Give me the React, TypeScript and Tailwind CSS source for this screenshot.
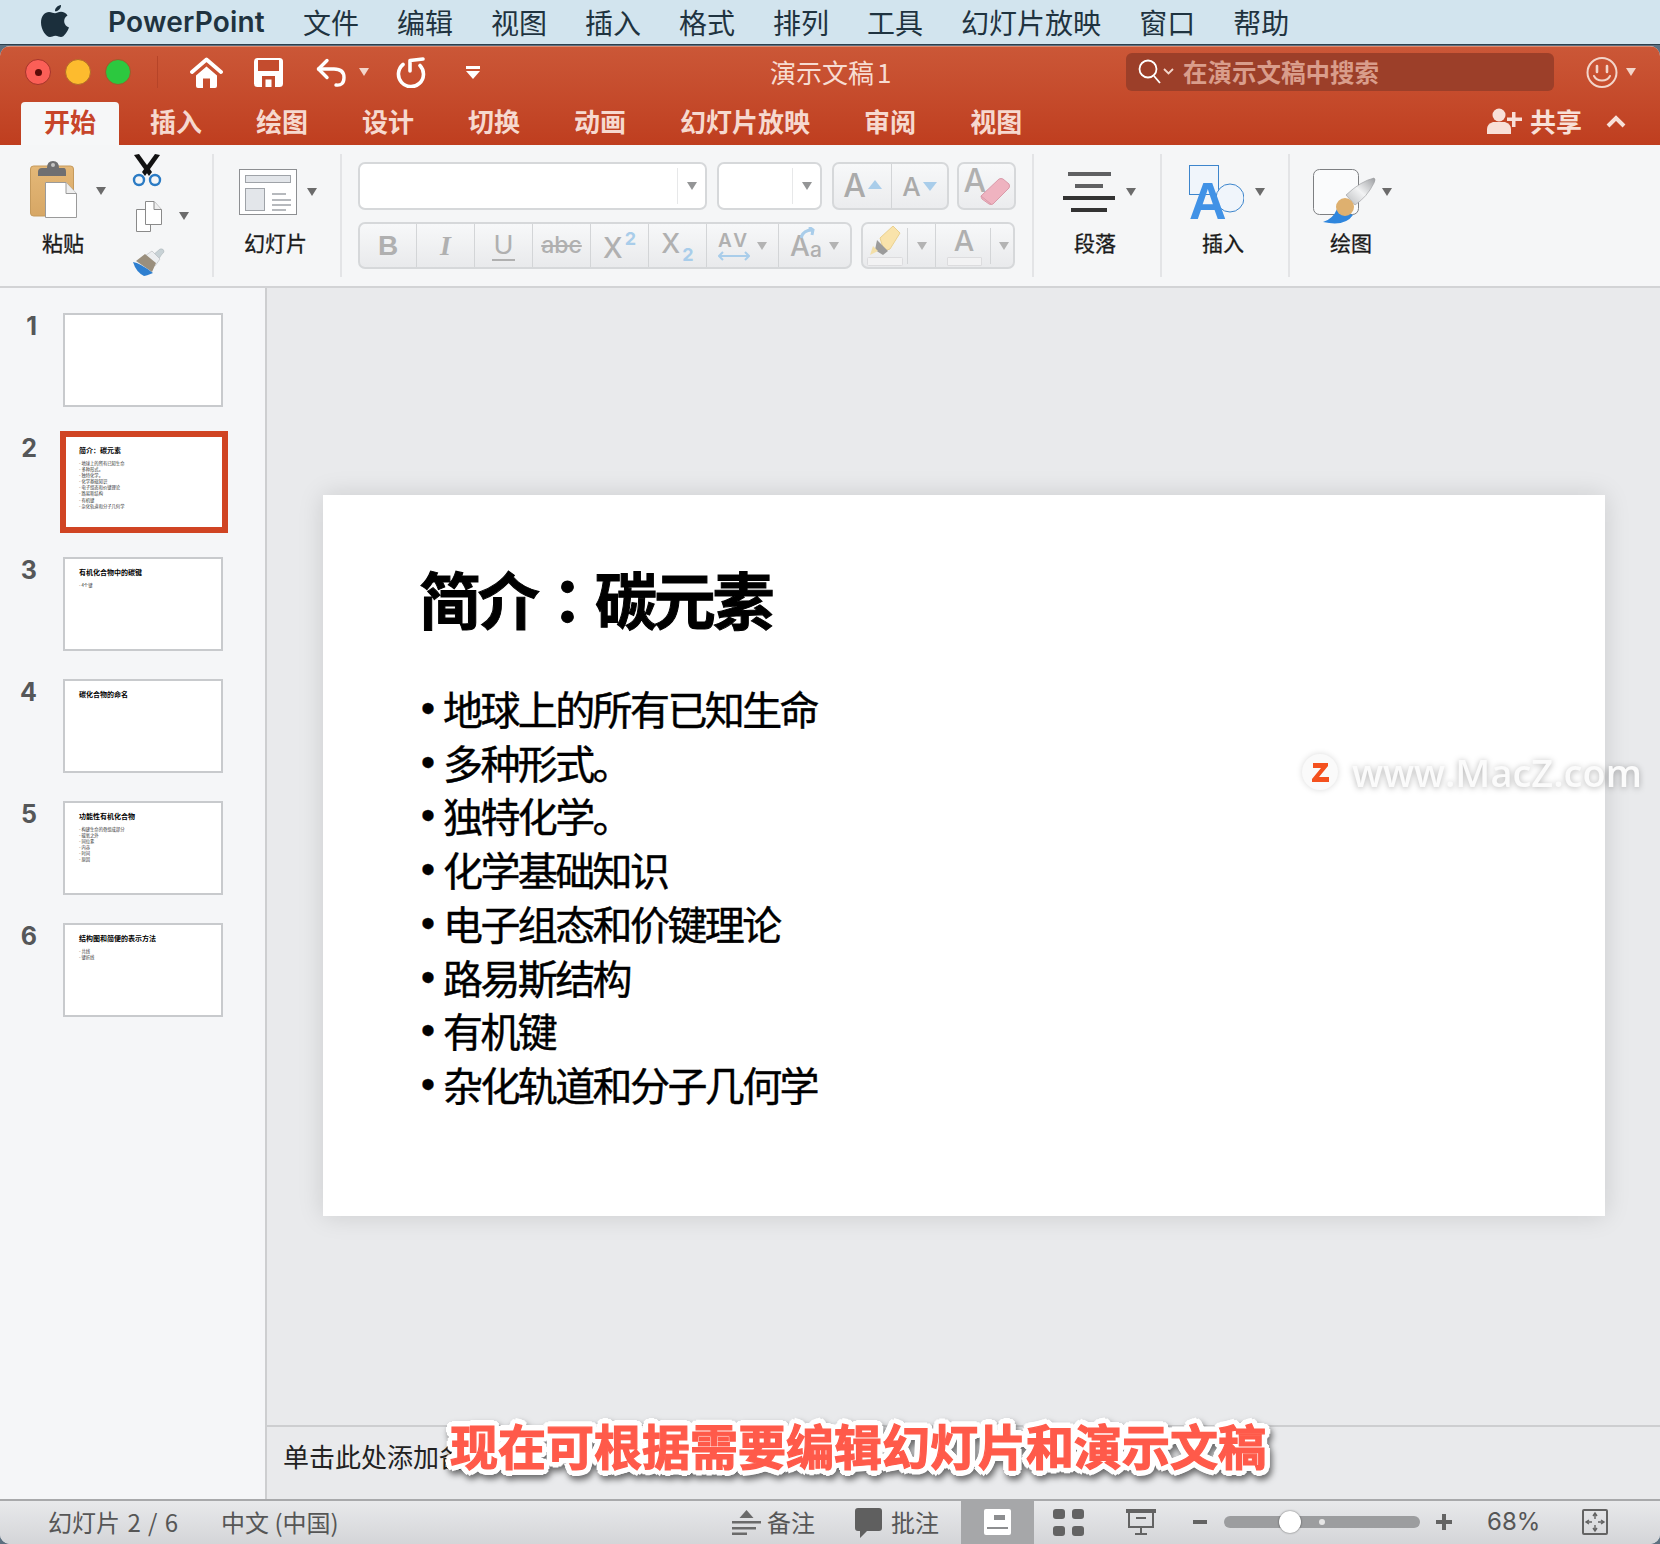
import React from 'react';

const menuItems = ['文件', '编辑', '视图', '插入', '格式', '排列', '工具', '幻灯片放映', '窗口', '帮助'];
const tabs = ['插入', '绘图', '设计', '切换', '动画', '幻灯片放映', '审阅', '视图'];

const slides = [
  { n: 1, title: '', items: [] as string[] },
  { n: 2, title: '简介：碳元素', items: ['地球上的所有已知生命', '多种形式。', '独特化学。', '化学基础知识', '电子组态和价键理论', '路易斯结构', '有机键', '杂化轨道和分子几何学'] },
  { n: 3, title: '有机化合物中的碳键', items: ['4个键'] },
  { n: 4, title: '碳化合物的命名', items: [] },
  { n: 5, title: '功能性有机化合物', items: ['构建生命的骨组成部分', '碳氧之外', '同位素', '内容', '时间', '原因'] },
  { n: 6, title: '结构图和简便的表示方法', items: ['共线', '键折线'] },
];

function Caret({ className = 'text-[#6b6b6b]' }: { className?: string }) {
  return (
    <svg width="10" height="8" viewBox="0 0 10 8" className={className}>
      <path d="M0 0h10L5 8z" fill="currentColor" />
    </svg>
  );
}

function Label({ className, children }: { className: string; children: React.ReactNode }) {
  return (
    <div className={`${className} text-[21px] leading-[28px] whitespace-nowrap [-webkit-text-stroke:0.3px_#1a1a1a]`}>
      {children}
    </div>
  );
}

function Thumb({ title, items, active }: { title: string; items: string[]; active: boolean }) {
  return (
    <div
      className={
        active
          ? 'w-[168px] h-[102px] -ml-[3px] -my-[4px] border-[6px] border-[#d04423] bg-white pl-[13px] pt-[6px]'
          : 'w-[160px] h-[94px] border-2 border-[#c8cacd] bg-white pl-[14px] pt-[6px]'
      }
    >
      {title && <div className="text-[7px] leading-[14px] font-bold text-black whitespace-nowrap">{title}</div>}
      {items.length > 0 && (
        <div className="mt-[3px] text-[4.3px] leading-[6.1px] text-[#333]">
          {items.map((t) => (
            <div key={t} className="whitespace-nowrap">- {t}</div>
          ))}
        </div>
      )}
    </div>
  );
}

function ToolBtn({ w, children, last }: { w: string; children: React.ReactNode; last?: boolean }) {
  return (
    <div className={`${w} h-full flex items-center justify-center ${last ? '' : 'border-r border-[#d3d5d7]'}`}>
      {children}
    </div>
  );
}

function Home() {
  return (
    <svg width="33" height="31" viewBox="0 0 33 31" fill="white">
      <path d="M2 15 16.500 2.500 31 15" fill="none" stroke="white" strokeWidth="3.800" strokeLinecap="round" strokeLinejoin="round" />
      <path d="M6 18.500 16.500 9.500 27 18.500V29q0 2-2 2h-5v-9.500h-7V31H8q-2 0-2-2z" />
    </svg>
  );
}

function Save() {
  return (
    <svg width="29" height="29" viewBox="0 0 29 29">
      <rect width="29" height="29" rx="3.500" fill="white" />
      <rect x="4" y="2" width="21" height="11" fill="#c44c2e" />
      <rect x="8" y="18" width="13" height="11" fill="#c44c2e" />
      <rect x="11.500" y="21.500" width="6" height="7.500" fill="white" />
    </svg>
  );
}

function Undo() {
  return (
    <svg width="31" height="29" viewBox="0 0 31 29" fill="none" stroke="white" strokeWidth="3.400" strokeLinecap="round" strokeLinejoin="round">
      <path d="M11 2.500 2.500 11l8.500 8.500" />
      <path d="M2.500 11H18q10 0 10 8.500T20 27" />
    </svg>
  );
}

function Redo() {
  return (
    <svg width="31" height="31" viewBox="0 0 31 31" fill="none" stroke="white" strokeWidth="3.600" strokeLinecap="round" strokeLinejoin="round">
      <path d="M14 14V3.500L27 2" />
      <path d="M7 7.500a12.500 12.500 0 1 0 17 1" />
    </svg>
  );
}

function Smiley() {
  return (
    <svg width="32" height="33" viewBox="0 0 32 33" fill="none" stroke="#f3d5ca" strokeWidth="2">
      <circle cx="16" cy="16.500" r="14.500" />
      <path d="M11 10v6M21 10v6" strokeWidth="2.600" strokeLinecap="round" />
      <path d="M8 20c3 6 13 6 16 0" strokeLinecap="round" />
    </svg>
  );
}

function Scissors() {
  return (
    <svg width="30" height="33" viewBox="0 0 30 33" fill="none">
      <path d="M2 1l5-1 13 18-3 4z" fill="#111" />
      <path d="M28 1l-5-1-13 18 3 4z" fill="#111" />
      <circle cx="7" cy="26" r="5" stroke="#2b7bc4" strokeWidth="2.400" />
      <circle cx="23" cy="26" r="5" stroke="#2b7bc4" strokeWidth="2.400" />
    </svg>
  );
}

function Clipboard() {
  return (
    <svg width="47" height="58" viewBox="0 0 47 58">
      <defs>
        <linearGradient id="board" x1="0" y1="0" x2="0" y2="1">
          <stop offset="0" stopColor="#e4b878" />
          <stop offset="1" stopColor="#d7a765" />
        </linearGradient>
      </defs>
      <rect x="0.500" y="6" width="43" height="50" rx="3" fill="url(#board)" stroke="#c59a5c" />
      <path d="M8 16v-4q0-4 4-4h5q0-7 6-7t6 7h5q2 0 2 4v4z" fill="#6f6f71" />
      <circle cx="23" cy="5" r="2" fill="#c4c4c4" />
      <path d="M15.500 22.500H36l10.500 11v24h-31z" fill="white" stroke="#9a9a9a" />
      <path d="M36 22.500v11h10.500" fill="#eee" stroke="#9a9a9a" />
    </svg>
  );
}

function Copy() {
  return (
    <svg width="26" height="31" viewBox="0 0 26 31" fill="white" stroke="#8a8a8a">
      <path d="M.5 8.500h14v22H.5z" />
      <path d="M9.500.5H18l7.500 8v15h-16z" />
      <path d="M18 .5v8h7.500" fill="#eee" />
    </svg>
  );
}

function FormatBrush() {
  return (
    <svg width="33" height="29" viewBox="0 0 33 29">
      <path d="M21 7 28 1q3-1 4 2 0 2-2 3l-4 6z" fill="#c8d2d6" stroke="#a5aeb2" strokeWidth="0.500" />
      <path d="M10 10 20 3l8 8-5 7z" fill="#eceef0" stroke="#a8acb0" strokeWidth="0.500" />
      <path d="M4 13 13 6l11 9-4 9Q10 17 4 13z" fill="#9a8f7d" />
      <path d="M1 14Q8 15 21 25q-7 3-9 3Q4 24 1 14z" fill="#2e7fd0" />
    </svg>
  );
}

function LayoutIcon() {
  return (
    <svg width="58" height="46" viewBox="0 0 58 46" fill="none">
      <rect x="0.500" y="0.500" width="57" height="45" fill="white" stroke="#8d8f92" />
      <rect x="6.500" y="6.500" width="45" height="7" fill="#e3e6ea" stroke="#9fa3a8" />
      <rect x="6.500" y="19.500" width="19" height="22" fill="#e3e6ea" stroke="#9fa3a8" />
      <path d="M33 25h14M33 31h19M33 36h19M33 41h14" stroke="#9fa3a8" strokeWidth="1.600" />
    </svg>
  );
}

function ParaIcon() {
  return (
    <div className="w-[52px] flex flex-col items-center gap-[8px]">
      <div className="w-[43px] h-[4px] bg-[#5f6062]" />
      <div className="w-[28px] h-[4px] bg-[#5f6062]" />
      <div className="w-[52px] h-[4px] bg-[#333]" />
      <div className="w-[36px] h-[4px] bg-[#333]" />
    </div>
  );
}

function InsertIcon() {
  return (
    <div className="relative w-[55px] h-[56px]">
      <svg width="55" height="56" viewBox="0 0 55 56">
        <rect x="0.500" y="0.500" width="29" height="29" fill="#f0f5fb" stroke="#3d85cc" />
        <circle cx="41" cy="33" r="14" fill="#f0f5fb" stroke="#3d85cc" />
      </svg>
      <span className="absolute left-0 bottom-0 font-['Liberation_Sans',sans-serif] font-bold text-[52px] leading-[39px] text-[#4192e6]">A</span>
    </div>
  );
}

function DrawIcon() {
  return (
    <svg width="63" height="57" viewBox="0 0 63 57">
      <defs>
        <linearGradient id="handle" x1="0" y1="1" x2="1" y2="0">
          <stop offset="0" stopColor="#b9bbbd" />
          <stop offset="0.500" stopColor="#f2f3f4" />
          <stop offset="1" stopColor="#9c9ea1" />
        </linearGradient>
      </defs>
      <rect x="0.500" y="0.500" width="45" height="45" rx="6" fill="#fafbfc" stroke="#7d7f82" />
      <path d="M33 26Q48 12 61 9q2 1 0 5Q54 28 42 36z" fill="url(#handle)" stroke="#97999c" strokeWidth="0.600" />
      <path d="M10 53Q20 50 24 40L40 46Q32 58 10 53z" fill="#2f86dd" />
      <circle cx="32" cy="38" r="9" fill="#deb06f" />
    </svg>
  );
}

function Eraser() {
  return (
    <div className="relative w-[46px] h-[40px] flex items-start">
      <span className="font-['Inter',sans-serif] font-medium text-[32px] leading-[30px] text-[#b0b0b0]">A</span>
      <svg width="31" height="29" viewBox="0 0 31 29" className="absolute right-0 bottom-0">
        <path d="M2 19 20 2q2-1 4 0l6 5q1 2 0 4L14 27q-2 1-4 0l-7-5q-1-2-1-3z" fill="#efb3c0" stroke="#d99aa9" />
        <path d="M2 19l10 8" stroke="#d99aa9" fill="none" />
      </svg>
    </div>
  );
}

function Highlighter() {
  return (
    <svg width="36" height="40" viewBox="0 0 36 40">
      <path d="M13 12 26 0l7 7-10 16-6 2z" fill="#f9e3ab" stroke="#e9d08f" />
      <path d="M10 14l11 11-5 4-8-5z" fill="#9b9b9b" />
      <path d="M6 20l5 5-8 4z" fill="#f3dfa8" />
      <rect x="0.500" y="31.500" width="35" height="8" rx="1" fill="#f2f2f3" stroke="#dcdcde" />
    </svg>
  );
}

export default function App() {
  return (
    <div className="relative w-[1660px] h-[1544px] overflow-hidden flex flex-col bg-[#5d7080] font-['Noto_Sans_CJK_SC',sans-serif]">
      {/* menu bar */}
      <div className="h-[45px] shrink-0 flex items-center pb-[1px] bg-[#d2e4ee] border-b border-[#2c3f4c] text-[#1f3340]">
        <svg width="28" height="32" viewBox="0 0 28 32" className="ml-[41px] mb-[2px]" fill="#1b2f3c">
          <path d="M20 0c.3 3-2.600 6.500-6 6.300C13.600 3.300 16.800.300 20 0z" />
          <path d="M14 8.300c1.600 0 3.500-1.500 6-1.500 2.500 0 5 1.300 6.500 3.600-5 3-4.200 10 1.500 12-1.500 4-5 9.600-8 9.600-2 0-3-1.300-5.500-1.300s-3.600 1.300-5.500 1.300C5 32 0 24.500 0 17.500 0 11 4 7 8 7c2.500 0 4.500 1.300 6 1.300z" />
        </svg>
        <div className="ml-[39px] w-[195px] font-['Inter',sans-serif] font-semibold text-[28px] tracking-[0.2px]">PowerPoint</div>
        <div className="flex gap-[38px] text-[28px] leading-none">
          {menuItems.map((m) => (
            <span key={m + m.length} className="whitespace-nowrap">{m}</span>
          ))}
        </div>
      </div>

      {/* app window */}
      <div className="flex-1 min-h-0 mt-[1px] flex flex-col rounded-[10px] overflow-hidden bg-[#e9eaec]">
        <div className="h-[99px] shrink-0 bg-gradient-to-b from-[#cb5737] to-[#bf3e1f] border-t border-[#de8a70] flex flex-col">
          <div className="h-[55px] flex items-center pb-[5px]">
            <div className="w-[770px] flex items-center pl-[25px]">
              <div className="w-[26px] h-[26px] rounded-full bg-[#fb5f57] border border-[#a5342a] flex items-center justify-center">
                <div className="w-[7px] h-[7px] rounded-full bg-[#5c0c08]" />
              </div>
              <div className="ml-[14px] w-[26px] h-[26px] rounded-full bg-[#fdbb2e] border border-[#b26b28]" />
              <div className="ml-[14px] w-[26px] h-[26px] rounded-full bg-[#2cc83f] border border-[#a5562a]" />
              <div className="ml-[26px] w-px h-[32px] bg-[#b64428]" />
              <div className="ml-[32px]"><Home /></div>
              <div className="ml-[31px]"><Save /></div>
              <div className="ml-[33px]"><Undo /></div>
              <div className="ml-[12px]"><Caret className="text-[#f3d5ca]" /></div>
              <div className="ml-[27px]"><Redo /></div>
              <div className="ml-[39px] flex flex-col items-center gap-[2px]">
                <div className="w-[14px] h-[3px] bg-white" />
                <svg width="14" height="8" viewBox="0 0 14 8"><path d="M0 0h14L7 8z" fill="white" /></svg>
              </div>
            </div>
            <div className="w-[356px] text-[26px] leading-none text-[#f7dcd2]">演示文稿<span className="ml-[3px]">1</span></div>
            <div className="w-[428px] h-[38px] rounded-[6px] bg-[#9c3f29] flex items-center pl-[11px]">
              <svg width="37" height="30" viewBox="0 0 37 30" fill="none" stroke="white" strokeWidth="1.800">
                <circle cx="11" cy="12" r="8.500" />
                <path d="M17 19l6 7" />
                <path d="M27 12l4.500 4.500L36 12" stroke="#f3d5ca" />
              </svg>
              <span className="ml-[9px] text-[24.5px] leading-none font-bold text-[#d99d8b]">在演示文稿中搜索</span>
            </div>
            <div className="ml-[32px]"><Smiley /></div>
            <div className="ml-[8px]"><Caret className="text-[#f3d5ca]" /></div>
          </div>
          <div className="h-[43px] flex pl-[21px] gap-2">
            <div className="h-[43px] px-[23px] pb-[6px] rounded-t-[4px] bg-[#f6f7f8] flex items-center text-[26px] font-bold text-[#c7452a]">开始</div>
            {tabs.map((t) => (
              <div key={t + t.length} className="h-[43px] px-[23px] pb-[6px] flex items-center text-[26px] font-bold text-[#f6d9cf] whitespace-nowrap">{t}</div>
            ))}
            <div className="ml-auto flex items-center pr-[34px] pb-[6px] text-[#f8e0d8]">
              <svg width="35" height="26" viewBox="0 0 35 26" fill="#f8e0d8">
                <circle cx="12" cy="7" r="6.500" />
                <path d="M0 26v-5q0-5 6-7h12q6 2 6 7v5z" />
                <path d="M25 4h3.500v5.500H35V13h-6.500v6H25v-6h-5V9.500h5z" />
              </svg>
              <span className="ml-[8px] text-[26px] leading-none font-bold">共享</span>
              <svg width="20" height="14" viewBox="0 0 20 14" fill="none" stroke="#f8e0d8" strokeWidth="4" className="ml-[24px]">
                <path d="M2 12l8-8 8 8" />
              </svg>
            </div>
          </div>
        </div>

        {/* ribbon */}
        <div className="h-[143px] shrink-0 flex items-start bg-[#f5f6f7] border-b-2 border-[#d2d3d5] text-[#1a1a1a]">
          <div className="mt-[9px] h-[123px] w-[214px] shrink-0 border-r-2 border-[#e3e4e6] flex">
            <div className="w-[132px] pl-[30px] pt-[6px]">
              <div className="flex h-[58px]">
                <Clipboard />
                <div className="ml-[19px] mt-[27px]"><Caret /></div>
              </div>
              <Label className="ml-[12px] mt-[10px]">粘贴</Label>
            </div>
            <div className="flex flex-col">
              <div className="h-[47px]"><Scissors /></div>
              <div className="ml-[4px] h-[47px] flex">
                <Copy />
                <div className="ml-[17px] mt-[11px]"><Caret /></div>
              </div>
              <FormatBrush />
            </div>
          </div>
          <div className="mt-[9px] h-[123px] w-[128px] shrink-0 border-r-2 border-[#e3e4e6] pl-[25px] pt-[15px]">
            <div className="flex h-[49px]">
              <LayoutIcon />
              <div className="ml-[10px] mt-[19px]"><Caret /></div>
            </div>
            <Label className="ml-[5px] mt-[10px]">幻灯片</Label>
          </div>

          {/* font group, disabled because no text is selected */}
          <div className="mt-[9px] h-[123px] w-[692px] shrink-0 border-r-2 border-[#e3e4e6] pl-[16px] pt-[8px] flex flex-col gap-[12px]">
            <div className="flex h-[48px]">
              <div className="w-[349px] rounded-[7px] border-2 border-[#d6d8da] bg-white flex items-center">
                <div className="ml-auto h-[36px] w-[28px] border-l border-[#e7e8e9] flex items-center justify-center">
                  <Caret className="text-[#949596]" />
                </div>
              </div>
              <div className="ml-[10px] w-[105px] rounded-[7px] border-2 border-[#d6d8da] bg-white flex items-center">
                <div className="ml-auto h-[36px] w-[28px] border-l border-[#e7e8e9] flex items-center justify-center">
                  <Caret className="text-[#949596]" />
                </div>
              </div>
              <div className="ml-[10px] w-[117px] rounded-[7px] border-2 border-[#d6d8da] bg-gradient-to-b from-[#f7f8f9] to-[#ebecee] flex font-['Inter',sans-serif] font-medium text-[#aaaaaa]">
                <div className="w-[58px] border-r border-[#d3d5d7] flex items-center justify-center gap-[2px] text-[32px]">
                  A
                  <svg width="14" height="9" viewBox="0 0 14 9" className="mb-[4px]"><path d="M7 0l7 9H0z" fill="#a9cdea" /></svg>
                </div>
                <div className="flex-1 flex items-center justify-center gap-[2px] text-[26px]">
                  A
                  <svg width="14" height="9" viewBox="0 0 14 9"><path d="M0 0h14L7 9z" fill="#a9cdea" /></svg>
                </div>
              </div>
              <div className="ml-[8px] w-[59px] rounded-[7px] border-2 border-[#d6d8da] bg-gradient-to-b from-[#f7f8f9] to-[#ebecee] flex items-center justify-center">
                <Eraser />
              </div>
            </div>
            <div className="flex h-[47px] font-['Inter',sans-serif] font-medium text-[#b0b0b0]">
              <div className="w-[494px] flex rounded-[7px] border-2 border-[#d6d8da] bg-gradient-to-b from-[#f7f8f9] to-[#e9eaec]">
                <ToolBtn w="w-[57px]"><span className="font-['Liberation_Sans',sans-serif] text-[28px] font-bold">B</span></ToolBtn>
                <ToolBtn w="w-[58px]"><span className="text-[28px] font-['Liberation_Serif',serif] font-bold italic">I</span></ToolBtn>
                <ToolBtn w="w-[58px]"><span className="font-['Liberation_Sans',sans-serif] text-[27px] leading-[28px] border-b-2 border-[#b0b0b0] px-[2px]">U</span></ToolBtn>
                <ToolBtn w="w-[58px]"><span className="text-[23px] line-through">abc</span></ToolBtn>
                <ToolBtn w="w-[58px]">
                  <span className="text-[28px] leading-none mt-[5px]">X</span>
                  <span className="text-[18px] leading-none mb-[14px] ml-[2px] text-[#a9cdea] font-bold">2</span>
                </ToolBtn>
                <ToolBtn w="w-[58px]">
                  <span className="text-[27px] leading-none mb-[4px]">X</span>
                  <span className="text-[18px] leading-none mt-[18px] ml-[2px] text-[#a9cdea] font-bold">2</span>
                </ToolBtn>
                <ToolBtn w="w-[72px]">
                  <div className="flex flex-col items-center mr-[7px]">
                    <span className="text-[19px] leading-[20px] tracking-[3px] font-semibold">AV</span>
                    <svg width="32" height="10" viewBox="0 0 32 10" fill="none" stroke="#a9cdea" strokeWidth="2">
                      <path d="M1 5h30M5 1 1 5l4 4M27 1l4 4-4 4" />
                    </svg>
                  </div>
                  <Caret className="text-[#b3b3b3]" />
                </ToolBtn>
                <ToolBtn w="flex-1" last>
                  <div className="relative mr-[7px] flex items-end">
                    <span className="text-[28px] leading-none">A</span>
                    <span className="text-[21px] leading-none">a</span>
                    <svg width="18" height="14" viewBox="0 0 18 14" className="absolute -top-[5px] left-[10px]" fill="none" stroke="#a9cdea" strokeWidth="3">
                      <path d="M1 11Q3 3 12 3M9 0l4 3-1 5" />
                    </svg>
                  </div>
                  <Caret className="text-[#b3b3b3]" />
                </ToolBtn>
              </div>
              <div className="ml-[9px] w-[154px] flex rounded-[7px] border-2 border-[#d6d8da] bg-gradient-to-b from-[#f7f8f9] to-[#e9eaec]">
                <div className="w-[73px] border-r border-[#d3d5d7] flex items-center pl-[4px]">
                  <Highlighter />
                  <div className="ml-[4px] h-[36px] w-[22px] border-l border-[#d3d5d7] flex items-center justify-center pl-[6px]">
                    <Caret className="text-[#b3b3b3]" />
                  </div>
                </div>
                <div className="flex-1 flex items-center pl-[10px]">
                  <div className="w-[36px] flex flex-col items-center">
                    <span className="text-[29px] leading-[30px]">A</span>
                    <div className="w-[35px] h-[9px] mt-[1px] rounded-[1px] bg-[#f2f2f3] border border-[#dcdcde]" />
                  </div>
                  <div className="ml-[8px] h-[36px] w-[20px] border-l border-[#d3d5d7] flex items-center justify-center pl-[6px]">
                    <Caret className="text-[#b3b3b3]" />
                  </div>
                </div>
              </div>
            </div>
          </div>

          <div className="mt-[9px] h-[123px] w-[128px] shrink-0 border-r-2 border-[#e3e4e6] pl-[29px] pt-[18px]">
            <div className="flex h-[46px]">
              <ParaIcon />
              <div className="ml-[11px] mt-[16px]"><Caret /></div>
            </div>
            <Label className="ml-[11px] mt-[10px]">段落</Label>
          </div>
          <div className="mt-[9px] h-[123px] w-[128px] shrink-0 border-r-2 border-[#e3e4e6] pl-[27px] pt-[11px]">
            <div className="flex h-[56px]">
              <InsertIcon />
              <div className="ml-[11px] mt-[23px]"><Caret /></div>
            </div>
            <Label className="ml-[13px] mt-[7px]">插入</Label>
          </div>
          <div className="mt-[9px] h-[123px] pl-[23px] pt-[15px]">
            <div className="flex h-[54px]">
              <DrawIcon />
              <div className="ml-[6px] mt-[19px]"><Caret /></div>
            </div>
            <Label className="ml-[17px] mt-[5px]">绘图</Label>
          </div>
        </div>

        <div className="flex-1 min-h-0 flex">
          {/* slide list */}
          <div className="w-[267px] shrink-0 bg-[#f5f6f8] border-r-2 border-[#cdced0] pt-[25px] flex flex-col gap-[28px]">
            {slides.map((s) => (
              <div key={s.n} className="h-[94px] flex">
                <div className="w-[37px] text-right font-['Inter',sans-serif] font-bold text-[25px] leading-none text-[#555759] pt-[1px]">{s.n}</div>
                <div className="ml-[26px]">
                  <Thumb title={s.title} items={s.items} active={s.n === 2} />
                </div>
              </div>
            ))}
          </div>

          <div className="flex-1 min-w-0 flex flex-col">
            <div className="flex-1 min-h-0 pl-[56px] pt-[207px]">
              <div className="w-[1282px] h-[721px] bg-white shadow-[0_0_24px_rgba(0,0,0,0.13)] pl-[98px] pt-[69px] text-black">
                <div className="-ml-[2px] text-[62px] leading-[68px] font-bold tracking-[-3.3px] [-webkit-text-stroke:1px_black]">
                  简介<span className="font-['Noto_Sans_CJK_TC',sans-serif]">：</span>碳元素
                </div>
                <ul className="mt-[50px] text-[40px] leading-[53.7px] tracking-[-2.6px] [-webkit-text-stroke:0.4px_black]">
                  {slides[1].items.map((t) => (
                    <li key={t} className="flex whitespace-nowrap">
                      <span className="w-[22px] font-['Liberation_Sans',sans-serif] tracking-normal">•</span>
                      {t}
                    </li>
                  ))}
                </ul>
              </div>
            </div>
            <div className="h-[74px] shrink-0 border-t-2 border-[#cdced0] flex items-center pl-[16px] pb-[15px] text-[26px] text-[#222]">
              单击此处添加备注
            </div>
          </div>
        </div>

        {/* status bar */}
        <div className="h-[45px] shrink-0 border-t-2 border-[#a8a9ab] bg-gradient-to-b from-[#e8e9eb] to-[#d4d5d8] flex items-center pl-[48px] pb-[1px] text-[24px] text-[#565656] whitespace-nowrap">
          <div className="w-[173px] [word-spacing:2px]">幻灯片 2 / 6</div>
          <div className="w-[511px]">中文 (中国)</div>
          <svg width="29" height="25" viewBox="0 0 29 25" fill="#6a6a6a">
            <path d="M14.500 0l7 8h-14z" />
            <path d="M0 11h29v2.500H0zM0 17h24v2.500H0zM0 22.500h15V25H0z" />
          </svg>
          <span className="ml-[6px]">备注</span>
          <svg width="27" height="31" viewBox="0 0 27 31" fill="#5f5f5f" className="ml-[40px]">
            <path d="M3 1h21q3 0 3 3v17q0 3-3 3H12l-7 7v-7H3q-3 0-3-3V4q0-3 3-3z" />
          </svg>
          <span className="ml-[9px]">批注</span>
          <div className="ml-[22px] w-[73px] h-[44px] bg-[#a6a7a9] flex items-center justify-center">
            <svg width="27" height="26" viewBox="0 0 27 26">
              <rect width="27" height="26" rx="2" fill="white" />
              <rect x="10" y="6" width="11" height="5" fill="#8d8e90" />
              <rect x="3" y="18" width="21" height="2" fill="#8d8e90" />
            </svg>
          </div>
          <div className="ml-[19px] grid grid-cols-2 gap-[7px]">
            <div className="w-[12px] h-[10px] rounded-[3px] bg-[#636363]" />
            <div className="w-[12px] h-[10px] rounded-[3px] bg-[#636363]" />
            <div className="w-[12px] h-[10px] rounded-[3px] bg-[#636363]" />
            <div className="w-[12px] h-[10px] rounded-[3px] bg-[#636363]" />
          </div>
          <svg width="30" height="26" viewBox="0 0 30 26" fill="none" stroke="#636363" className="ml-[42px]">
            <path d="M0 2h30" strokeWidth="4" />
            <path d="M3 3v15h24V3" strokeWidth="2" />
            <path d="M10 9h10" strokeWidth="2" />
            <path d="M15 18v6M9 25h12" strokeWidth="2" />
          </svg>
          <div className="ml-[37px] w-[14px] h-[4px] bg-[#636363]" />
          <div className="relative ml-[17px] w-[196px] h-[12px] rounded-full bg-[#9c9d9f]">
            <div className="absolute left-[55px] -top-[5px] w-[22px] h-[22px] rounded-full bg-white shadow-[0_0_2px_rgba(0,0,0,0.6)]" />
            <div className="absolute left-[95px] top-[3px] w-[6px] h-[6px] rounded-full bg-[#e6e6e6]" />
          </div>
          <svg width="16" height="16" viewBox="0 0 16 16" fill="#636363" className="ml-[16px]">
            <path d="M6 0h4v6h6v4h-6v6H6v-6H0V6h6z" />
          </svg>
          <span className="ml-[35px] font-['Inter',sans-serif]">68%</span>
          <svg width="26" height="26" viewBox="0 0 26 26" fill="none" stroke="#636363" className="ml-[42px]">
            <rect x="1" y="1" width="24" height="24" rx="1" strokeWidth="2" />
            <path d="M13 5v5M11 7l2-3 2 3M13 21v-5M11 19l2 3 2-3M5 13h5M7 11l-3 2 3 2M21 13h-5M19 11l3 2-3 2" strokeWidth="1.400" />
          </svg>
        </div>
      </div>

      {/* watermark over the slide */}
      <div className="absolute left-[1302px] top-[753px] flex items-center">
        <div className="w-[36px] h-[36px] rounded-full bg-[#fafafa] shadow-[0_0_6px_rgba(0,0,0,0.15)] flex items-center justify-center">
          <svg width="17" height="19" viewBox="0 0 17 19" fill="#f4511e">
            <path d="M1 0h15v3L7 14h10v5H0v-3L9 5H1z" />
          </svg>
        </div>
        <span className="ml-[14px] font-['Open_Sans',sans-serif] font-semibold text-[38px] leading-none text-[#fbfbfb] [filter:drop-shadow(0_1px_3px_rgba(0,0,0,0.3))] whitespace-nowrap">www.MacZ.com</span>
      </div>

      {/* subtitle over the notes pane */}
      <div className="absolute left-[450px] top-[1416px] text-[48px] leading-[56px] font-bold text-[#ff5a4a] whitespace-nowrap [-webkit-text-stroke:1.2px_#ff5a4a] [text-shadow:6px_0_0_#fff,-6px_0_0_#fff,0_6px_0_#fff,0_-6px_0_#fff,4px_4px_0_#fff,-4px_4px_0_#fff,4px_-4px_0_#fff,-4px_-4px_0_#fff,5px_3px_0_#fff,-5px_3px_0_#fff,5px_-3px_0_#fff,-5px_-3px_0_#fff,3px_5px_0_#fff,-3px_5px_0_#fff,3px_-5px_0_#fff,-3px_-5px_0_#fff,3px_0_0_#fff,-3px_0_0_#fff,0_3px_0_#fff,0_-3px_0_#fff] [filter:drop-shadow(2px_4px_3px_rgba(0,0,0,0.55))]">
        现在可根据需要编辑幻灯片和演示文稿
      </div>
    </div>
  );
}
